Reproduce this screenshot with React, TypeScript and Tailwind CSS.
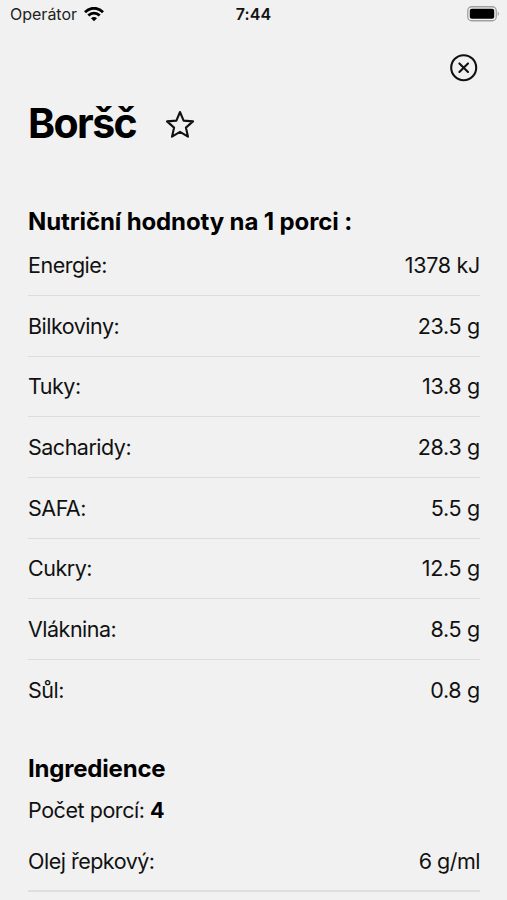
import React from "react";

const nutrition: [string, string][] = [
  ["Energie:", "1378 kJ"],
  ["Bilkoviny:", "23.5 g"],
  ["Tuky:", "13.8 g"],
  ["Sacharidy:", "28.3 g"],
  ["SAFA:", "5.5 g"],
  ["Cukry:", "12.5 g"],
  ["Vláknina:", "8.5 g"],
  ["Sůl:", "0.8 g"],
];

function Row({ name, value }: { name: string; value: string }) {
  return (
    <div className="flex h-[60.7px] items-center justify-between border-b-[1.5px] border-[#dcdcdc] text-[21.5px] last:border-transparent">
      <span className="tracking-[-0.5px]">{name}</span>
      <span className="tracking-[-0.3px]">{value}</span>
    </div>
  );
}

export default function App() {
  return (
    <main className="h-[900px] w-[507px] overflow-hidden bg-[#f1f1f1] font-['Inter',sans-serif] text-[#111]">
      <header className="grid h-7 grid-cols-3 items-center pr-2 pl-2.5 text-[16px]">
        <div className="flex items-center gap-[7px] text-[#222]">
          <span>Operátor</span>
          <svg width="20" height="15" viewBox="0 0 20 15" fill="none" stroke="#000" strokeWidth="2.8">
            <path d="M1 5.2C6-.1 14-.1 19 5.2M4.3 8.6c3.3-3.3 8.1-3.3 11.4 0" />
            <path d="M7 11.2c1.8-1.6 4.2-1.6 6 0l-3 3z" fill="#000" stroke="none" />
          </svg>
        </div>
        <time className="-ml-0.5 text-center font-semibold tracking-[0.1px]">7:44</time>
        <svg className="justify-self-end" width="32" height="16" viewBox="0 0 32 16">
          <rect x=".75" y=".75" width="28.5" height="14" rx="4" fill="none" stroke="#a0a0a0" strokeWidth="1.3" />
          <rect x="2.8" y="2.8" width="24.4" height="10" rx="2" />
          <path d="M30.7 5.5c1.6 1 1.6 3.5 0 4.5z" fill="#a0a0a0" />
        </svg>
      </header>
      <section className="pr-[27px] pl-7">
        <div className="flex justify-end pt-[26px]">
          <svg width="30" height="30" viewBox="0 0 30 30" fill="none" stroke="#111" strokeWidth="2.1" strokeLinecap="round">
            <circle cx="13.7" cy="13.7" r="12.5" />
            <path d="m9.4 9.4 8.6 8.6m0-8.6-8.6 8.6" />
          </svg>
        </div>
        <div className="flex h-20 items-center gap-[29px]">
          <h1 className="text-[41px] font-bold tracking-[-1.6px] text-black">Boršč</h1>
          <svg className="mt-0.5" width="30" height="30" viewBox="0 0 30 30" fill="none" stroke="#111" strokeWidth="2.1" strokeLinejoin="round">
            <path d="m15 2 3.6 8.6 9.4.8-7.1 6.2 2.1 9.1-8-4.8-8 4.8 2.1-9.1L2 11.4l9.4-.8z" />
          </svg>
        </div>
        <h2 className="mt-[43px] text-[24px] leading-[30px] font-bold tracking-[-0.12px] text-black">Nutriční hodnoty na 1 porci :</h2>
        <div className="-mt-[1.8px]">
          {nutrition.map(([name, value]) => (
            <Row key={name} name={name} value={value} />
          ))}
        </div>
        <h2 className="mt-[33.3px] text-[24px] leading-[30px] font-bold tracking-[-0.2px] text-black">Ingredience</h2>
        <p className="mt-3 text-[21.5px] leading-[28px] tracking-[-0.45px]">Počet porcí: <b className="text-black">4</b></p>
        <div className="mt-[7px] flex h-[61px] items-center justify-between border-b-2 border-[#dedede] pt-0.5 text-[21.5px]">
          <span className="tracking-[-0.5px]">Olej řepkový:</span>
          <span className="tracking-[-0.5px]">6 g/ml</span>
        </div>
      </section>
    </main>
  );
}
